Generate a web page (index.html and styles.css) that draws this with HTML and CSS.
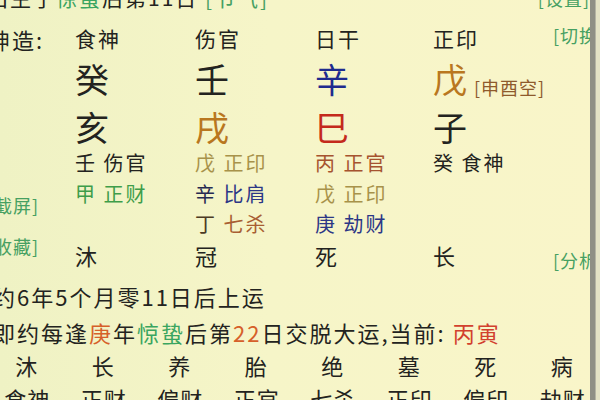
FILE: index.html
```html
<!DOCTYPE html>
<html lang="zh-CN">
<head>
<meta charset="utf-8">
<title>排盘</title>
<link rel="stylesheet" href="styles.css">
</head>
<body>
<div class="screen">
  <div class="content">
    <div class="topline">
      <span class="tl-text">出生于<span class="g2">惊蛰</span>后第11日 <span class="g">[节气]</span></span>
      <span class="side g">[设置]</span>
    </div>
    <div class="chart">
      <div class="leftcol">
        <div class="qz">坤造:</div>
        <div class="side g shot">[截屏]</div>
        <div class="side g fav">[收藏]</div>
      </div>
      <div class="pillars">
        <div class="row labels"><span>食神</span><span>伤官</span><span>日干</span><span>正印</span></div>
        <div class="row big stems"><span>癸</span><span>壬</span><span class="blue">辛</span><span class="orange">戊<span class="kong">[申酉空]</span></span></div>
        <div class="row big branches"><span>亥</span><span class="orange">戌</span><span class="red">巳</span><span>子</span></div>
        <div class="row hid h1"><span>壬 伤官</span><span class="khaki">戊 正印</span><span class="rust">丙 正官</span><span>癸 食神</span></div>
        <div class="row hid h2"><span class="green">甲 正财</span><span><span class="navy-dark">辛</span> <span class="navy">比肩</span></span><span class="khaki">戊 正印</span><span></span></div>
        <div class="row hid h3"><span></span><span><span class="brown-dark">丁</span> <span class="brown">七杀</span></span><span class="navy">庚 劫财</span><span></span></div>
        <div class="row cs4"><span>沐</span><span>冠</span><span>死</span><span>长</span></div>
      </div>
      <div class="rightcol">
        <div class="side g sw">[切换]</div>
        <div class="side g an">[分析]</div>
      </div>
    </div>
    <p class="yun">约6年5个月零11日后上运</p>
    <p class="yun yun2">即约每逢<span class="or">庚</span>年<span class="g2">惊蛰</span>后第<span class="or">22</span>日交脱大运,当前: <span class="rd">丙寅</span></p>
    <div class="dy cs8"><span>沐</span><span>长</span><span>养</span><span>胎</span><span>绝</span><span>墓</span><span>死</span><span>病</span></div>
    <div class="dy ss8"><span>食神</span><span>正财</span><span>偏财</span><span>正官</span><span>七杀</span><span>正印</span><span>偏印</span><span>劫财</span></div>
  </div>
  <div class="scrollbar"><div class="thumb"></div></div>
</div>
</body>
</html>
```
FILE: styles.css
```css
html, body {
  margin: 0;
  padding: 0;
}
body {
  width: 600px;
  height: 400px;
  overflow: hidden;
  font-family: "Noto Sans CJK SC", "Noto Sans", sans-serif;
  color: #232320;
  background: #f6f4c6;
}
.screen {
  display: flex;
  width: 600px;
  height: 400px;
  overflow: hidden;
  background: linear-gradient(90deg, #eff2c4 0%, #f6f5c8 45%, #f9f5c9 100%);
}
.content {
  flex: none;
  width: 590px;
  height: 400px;
  overflow: hidden;
}
.scrollbar {
  flex: none;
  width: 10px;
  height: 400px;
  display: flex;
  background: #e4e2c6;
}
.thumb {
  width: 5px;
  height: 400px;
  background: #8f8f86;
  border-right: 1px solid #b4b3a4;
}

/* shared */
.g { color: #46a062; }
.g2 { color: #3aa560; }
.side {
  font-size: 18px;
  line-height: 18px;
  letter-spacing: 1px;
  white-space: nowrap;
}

/* top line */
.topline {
  display: flex;
  margin-top: -13.5px;
  height: 21px;
  font-size: 21px;
  line-height: 21px;
  letter-spacing: 2px;
  white-space: nowrap;
}
.tl-text {
  margin-left: -13px;
  width: 566px;
}
.topline .side {
  font-size: 18px;
  margin-top: 2px;
}

/* chart */
.chart {
  display: flex;
  height: 262.5px;
}
.leftcol {
  flex: none;
  width: 75px;
  display: flex;
  flex-direction: column;
  align-items: flex-start;
}
.qz {
  margin-top: 20px;
  margin-left: -12px;
  font-size: 22px;
  line-height: 22px;
  letter-spacing: 2px;
  white-space: nowrap;
}
.leftcol .side { margin-left: -13px; }
.shot { margin-top: 146px; }
.fav { margin-top: 23px; }

.pillars {
  flex: none;
  width: 478px;
  display: flex;
  flex-direction: column;
}
.row {
  display: grid;
  grid-template-columns: 120px 120px 118px 120px;
  white-space: nowrap;
}
.labels {
  margin-top: 20px;
  font-size: 21px;
  line-height: 21px;
  letter-spacing: 2px;
}
.big {
  font-size: 34px;
  line-height: 34px;
}
.stems { margin-top: 13.5px; }
.branches { margin-top: 14px; }
.hid {
  font-size: 20px;
  line-height: 20px;
  letter-spacing: 2px;
}
.h1 { margin-top: 9px; }
.h2 { margin-top: 11px; }
.h3 { margin-top: 10px; }
.cs4 {
  margin-top: 10px;
  font-size: 22px;
  line-height: 22px;
}
.kong {
  display: inline-block;
  vertical-align: middle;
  margin-left: 7px;
  margin-top: 6px;
  font-size: 18px;
  line-height: 18px;
  letter-spacing: 1px;
  color: #8e5a2c;
}

.rightcol {
  flex: none;
  display: flex;
  flex-direction: column;
}
.sw { margin-top: 18px; }
.an { margin-top: 207px; }

/* colours */
.blue { color: #1f2b8e; }
.orange { color: #b9771f; }
.red { color: #c42a1c; }
.khaki { color: #a8924a; }
.rust { color: #a6532f; }
.green { color: #3f9d4a; }
.navy { color: #2c3786; }
.navy-dark { color: #262a52; }
.brown-dark { color: #4c3a24; }
.brown { color: #a85e33; }
.or { color: #d6602a; }
.rd { color: #d2402e; }

/* yun lines */
.yun {
  margin: 15px 0 0 -7px;
  font-size: 22px;
  line-height: 22px;
  letter-spacing: 2px;
  white-space: nowrap;
}
.yun2 { margin-top: 14px; }

.dy {
  display: grid;
  grid-template-columns: repeat(8, 76.5px);
  margin-left: -12px;
  font-size: 22px;
  line-height: 22px;
  text-align: center;
  white-space: nowrap;
}
.cs8 { margin-top: 11px; }
.ss8 {
  margin-top: 11px;
  letter-spacing: 1px;
  padding-left: 1px;
}
```
